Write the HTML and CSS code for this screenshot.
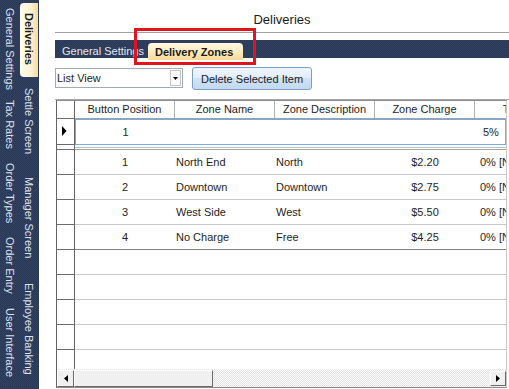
FILE: index.html
```html
<!DOCTYPE html>
<html>
<head>
<meta charset="utf-8">
<link rel="stylesheet" href="styles.css">
</head>
<body>
<div class="app">
  <nav class="sidebar">
    <div class="tabcol col-a">
      <div class="vtab a1">General Settings</div>
      <div class="vtab a2">Tax Rates</div>
      <div class="vtab a3">Order Types</div>
      <div class="vtab a4">Order Entry</div>
      <div class="vtab a5">User Interface</div>
    </div>
    <div class="tabcol col-b">
      <div class="vtab vtab-active">Deliveries</div>
      <div class="vtab b2">Settle Screen</div>
      <div class="vtab b3">Manager Screen</div>
      <div class="vtab b4">Employee Banking</div>
    </div>
  </nav>
  <main class="content">
    <div class="title">Deliveries</div>
    <div class="tabbar">
      <div class="htab">General Settings</div>
      <div class="htab htab-active">Delivery Zones</div>
    </div>
    <div class="toolbar">
      <div class="select">
        <span class="select-text">List View</span>
        <span class="select-btn"><svg width="5" height="3" viewBox="0 0 5 3"><polygon points="0,0 5,0 2.5,3" fill="#000"/></svg></span>
      </div>
      <button class="btn">Delete Selected Item</button>
    </div>
    <div class="divider"></div>
    <div class="grid">
      <div class="row row-head">
        <div class="rh"></div>
        <div class="cells">
          <div class="c">Button Position</div>
          <div class="c">Zone Name</div>
          <div class="c">Zone Description</div>
          <div class="c">Zone Charge</div>
          <div class="c">Tax Rate</div>
        </div>
      </div>
      <div class="row row-current">
        <div class="rh"><svg width="17" height="25" viewBox="0 0 17 25"><polygon points="5,7 9.5,12 5,17" fill="#000"/></svg></div>
        <div class="cells">
          <div class="c c-center">1</div>
          <div class="c"></div>
          <div class="c"></div>
          <div class="c"></div>
          <div class="c c-pct">5%</div>
        </div>
      </div>
      <div class="row row-sep">
        <div class="rh"></div>
        <div class="cells"></div>
      </div>
      <div class="row">
        <div class="rh"></div>
        <div class="cells">
          <div class="c c-center">1</div>
          <div class="c c-left">North End</div>
          <div class="c c-left">North</div>
          <div class="c c-center">$2.20</div>
          <div class="c c-last">0% [None]</div>
        </div>
      </div>
      <div class="row">
        <div class="rh"></div>
        <div class="cells">
          <div class="c c-center">2</div>
          <div class="c c-left">Downtown</div>
          <div class="c c-left">Downtown</div>
          <div class="c c-center">$2.75</div>
          <div class="c c-last">0% [None]</div>
        </div>
      </div>
      <div class="row">
        <div class="rh"></div>
        <div class="cells">
          <div class="c c-center">3</div>
          <div class="c c-left">West Side</div>
          <div class="c c-left">West</div>
          <div class="c c-center">$5.50</div>
          <div class="c c-last">0% [None]</div>
        </div>
      </div>
      <div class="row row-lastdata">
        <div class="rh"></div>
        <div class="cells">
          <div class="c c-center">4</div>
          <div class="c c-left">No Charge</div>
          <div class="c c-left">Free</div>
          <div class="c c-center">$4.25</div>
          <div class="c c-last">0% [None]</div>
        </div>
      </div>
      <div class="row"><div class="rh"></div><div class="cells"></div></div>
      <div class="row"><div class="rh"></div><div class="cells"></div></div>
      <div class="row"><div class="rh"></div><div class="cells"></div></div>
      <div class="row"><div class="rh"></div><div class="cells"></div></div>
      <div class="row row-filler"><div class="rh"></div><div class="cells"></div></div>
      <div class="hscroll">
        <div class="sbtn"><svg width="4" height="7" viewBox="0 0 4 7"><polygon points="4,0 0,3.5 4,7" fill="#000"/></svg></div>
        <div class="thumb"></div>
        <div class="sbtn sbtn-right"><svg width="4" height="7" viewBox="0 0 4 7"><polygon points="0,0 4,3.5 0,7" fill="#000"/></svg></div>
      </div>
    </div>
  </main>
  <div class="highlight"></div>
</div>
</body>
</html>
```

FILE: styles.css
```css
* { box-sizing: border-box; }
html, body { margin: 0; padding: 0; }
body {
  width: 509px;
  height: 389px;
  overflow: hidden;
  background: #fff;
  font-family: "Liberation Sans", Arial, sans-serif;
  font-size: 11px;
  color: #1e1e1e;
}
.app {
  position: relative;
  display: flex;
  width: 509px;
  height: 389px;
}

/* Sidebar with vertical tabs */
.sidebar {
  width: 39px;
  flex: none;
  display: flex;
  background-color: #2b3959;
  background-image: repeating-conic-gradient(rgba(255,255,255,0.04) 0 25%, rgba(0,0,0,0) 0 50%);
  background-size: 2px 2px;
  color: #dde2ea;
}
.tabcol { display: flex; flex-direction: column; }
.col-a { width: 20px; padding-top: 8px; }
.col-b { width: 19px; padding-top: 3px; }
.vtab {
  writing-mode: vertical-rl;
  width: 20px;
  line-height: 20px;
  white-space: nowrap;
  flex: none;
}
.col-b .vtab { width: 18px; line-height: 18px; }
.a1 { height: 92px; }
.a2 { height: 63px; }
.a3 { height: 74px; }
.a4 { height: 71px; }
.vtab-active {
  height: 74px;
  padding-top: 10px;
  background: linear-gradient(to right, #fffcef 0%, #fdf3d2 60%, #f3dc9e 100%);
  border-radius: 4px 0 0 4px;
  color: #1a1a1a;
  font-weight: bold;
}
.col-b .b2 { margin-top: 11px; height: 89px; }
.col-b .b3 { height: 106px; }

/* Main content */
.content {
  flex: 1;
  margin-left: 16px;
  display: flex;
  flex-direction: column;
  min-width: 0;
}
.title {
  flex: none;
  height: 33px;
  padding-top: 12px;
  border-bottom: 1px solid #a0a0a0;
  text-align: center;
  font-size: 13px;
  line-height: 16px;
  color: #1a1a1a;
}
.tabbar {
  flex: none;
  margin-top: 7px;
  height: 18px;
  background-color: #2b3959;
  background-image: repeating-conic-gradient(rgba(255,255,255,0.04) 0 25%, rgba(0,0,0,0) 0 50%);
  background-size: 2px 2px;
  display: flex;
  align-items: flex-start;
}
.htab {
  flex: none;
  width: 93px;
  height: 18px;
  padding: 4px 0 0 7px;
  line-height: 14px;
  color: #e2e6ee;
  white-space: nowrap;
}
.htab-active {
  width: 95px;
  height: 17px;
  margin-top: 3px;
  padding: 2px 0 0 7px;
  font-weight: bold;
  color: #1a1a1a;
  background: linear-gradient(to bottom, #fff8e2 0%, #fbe9b8 60%, #f5da95 100%);
  border-radius: 4px 4px 0 0;
  position: relative;
  z-index: 1;
}

.toolbar {
  flex: none;
  margin-top: 9px;
  height: 23px;
  display: flex;
  align-items: flex-start;
}
.select {
  margin-top: 1px;
  width: 128px;
  height: 20px;
  border: 1px solid #a4aab4;
  background: #fff;
  display: flex;
  justify-content: space-between;
}
.select-text { padding: 2px 0 0 1px; line-height: 14px; }
.select-btn {
  width: 11px;
  height: 16px;
  margin: 1px 1px 0 0;
  border: 1px solid #c6c6c6;
  background: #fafafa;
  display: flex;
  align-items: center;
  justify-content: center;
}
.btn {
  margin-left: 9px;
  width: 120px;
  height: 23px;
  padding: 0;
  border: 1px solid #7c9fc4;
  border-radius: 3px;
  background: linear-gradient(to bottom, #eef5fd 0%, #e3eefa 45%, #d0e3f5 50%, #c3d9ef 100%);
  font: inherit;
  color: #1a1a1a;
  line-height: 20px;
}
.divider {
  flex: none;
  margin-top: 9px;
  border-top: 1px solid #a8a8a8;
}

/* Grid */
.grid {
  flex: none;
  margin-left: 1px;
  width: 451px;
  height: 288px;
  border: 1px solid #8c8c8c;
  border-left-color: #646464;
  border-right-color: #c8c8c8;
  display: flex;
  flex-direction: column;
  overflow: hidden;
}
.row { display: flex; flex: none; height: 25px; }
.rh {
  width: 18px;
  flex: none;
  border-right: 1px solid #646464;
  border-bottom: 1px solid #6c6c6c;
}
.cells {
  flex: 1;
  display: flex;
  overflow: hidden;
  border-bottom: 1px solid #c8c8c8;
  min-width: 0;
}
.c {
  flex: none;
  width: 100px;
  white-space: nowrap;
  overflow: hidden;
  line-height: 24px;
}
.c-center { text-align: center; }
.c-left { padding-left: 1px; }
.c-last { padding-left: 5px; }

.row-head { height: 18px; }
.row-head .cells { border-bottom-color: #a0a0a0; }
.row-head .c {
  text-align: center;
  line-height: 17px;
  border-right: 1px solid #b4b4b4;
}
.row-current { height: 26px; }
.row-current .cells { border: 1px solid #76abe0; }
.row-current .c { width: 100px; line-height: 24px; }
.row-current .c-center { width: 99px; }
.c-pct { padding-left: 8px; }
.row-sep { height: 5px; }
.row-sep .rh { border-bottom-color: #6c6c6c; }
.row-sep .cells {
  border-bottom-color: #a4a4a4;
  background: linear-gradient(to bottom, transparent 2px, #c0c0c0 2px, #c0c0c0 3px, transparent 3px);
}
.row-lastdata .cells { border-bottom-color: #808080; }
.row-filler { height: 19px; }
.row-filler .rh { border-bottom: none; }
.row-filler .cells { border-bottom: none; }

.hscroll {
  flex: none;
  height: 18px;
  display: flex;
  align-items: center;
  background-color: #fff;
  background-image: repeating-conic-gradient(#e4e4e4 0 25%, #fbfbfb 0 50%);
  background-size: 2px 2px;
}
.sbtn {
  flex: none;
  width: 17px;
  height: 17px;
  background: #f0f0f0;
  border: 1px solid;
  border-color: #ffffff #6a6a6a #6a6a6a #ffffff;
  display: flex;
  align-items: center;
  justify-content: center;
}
.thumb {
  flex: none;
  width: 139px;
  height: 17px;
  background: #f0f0f0;
  border: 1px solid;
  border-color: #ffffff #6a6a6a #6a6a6a #ffffff;
}
.sbtn-right {
  margin-left: auto;
  width: 16px;
  height: 15px;
}

/* annotation overlay */
.highlight {
  position: absolute;
  left: 134px;
  top: 28px;
  width: 122px;
  height: 37px;
  border: 3px solid #e3131b;
}
```
